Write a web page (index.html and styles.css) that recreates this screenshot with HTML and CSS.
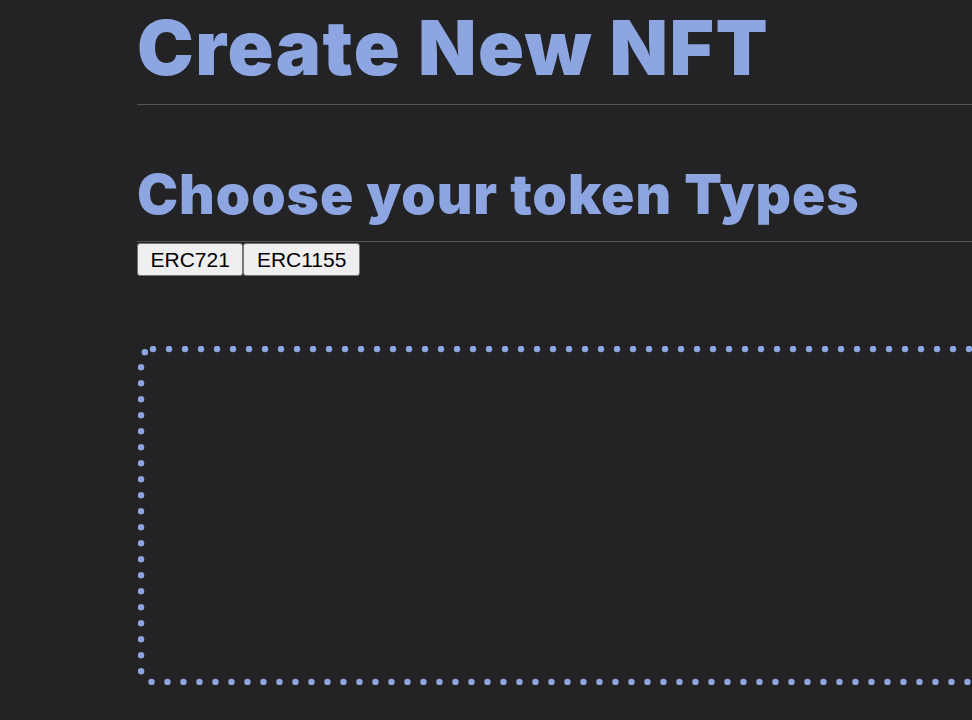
FILE: index.html
```html
<!DOCTYPE html>
<html>
<head>
<meta charset="utf-8">
<link rel="stylesheet" href="styles.css">
</head>
<body>
<main class="page">
  <h1 class="title">Create New NFT</h1>
  <h2 class="subtitle">Choose your token Types</h2>
  <div class="types">
    <button class="type-btn">ERC721</button><button class="type-btn">ERC1155</button>
  </div>
  <div class="dropzone">
    <svg class="dropzone-border" width="1000" height="339" viewBox="0 0 1000 339">
      <rect x="3" y="3" width="994" height="333" rx="12" ry="12" fill="none" stroke="#8da6e1" stroke-width="6.5" stroke-linecap="round" stroke-dasharray="0 16"/>
    </svg>
  </div>
</main>
</body>
</html>
```
FILE: styles.css
```css
html, body {
  margin: 0;
  background: #232325;
  overflow: hidden;
  height: 720px;
}
.page {
  padding-left: 137px;
  width: 1200px;
}
.title {
  margin: 0;
  padding: 2px 0 12px;
  font-family: Inter, "DejaVu Sans", sans-serif;
  font-weight: 900;
  font-size: 76px;
  line-height: 90px;
  letter-spacing: 1.5px;
  color: #8da6e1;
  border-bottom: 1px solid #555557;
}
.subtitle {
  margin: 0;
  padding: 55.5px 0 14.5px;
  font-family: Inter, "DejaVu Sans", sans-serif;
  font-weight: 900;
  font-size: 55px;
  line-height: 66px;
  letter-spacing: 1px;
  color: #8da6e1;
  border-bottom: 1px solid #555557;
}
.types {
  display: flex;
  margin-top: 1px;
}
.type-btn {
  font-family: "Liberation Sans", Arial, sans-serif;
  font-size: 21px;
  color: #000;
  background: #efefef;
  border: 1px solid #767676;
  border-radius: 3px;
  height: 33px;
  padding: 0 12.5px;
}
.dropzone {
  margin-top: 70px;
  margin-left: 1px;
  width: 1000px;
  height: 339px;
}
.dropzone-border {
  display: block;
}
```
